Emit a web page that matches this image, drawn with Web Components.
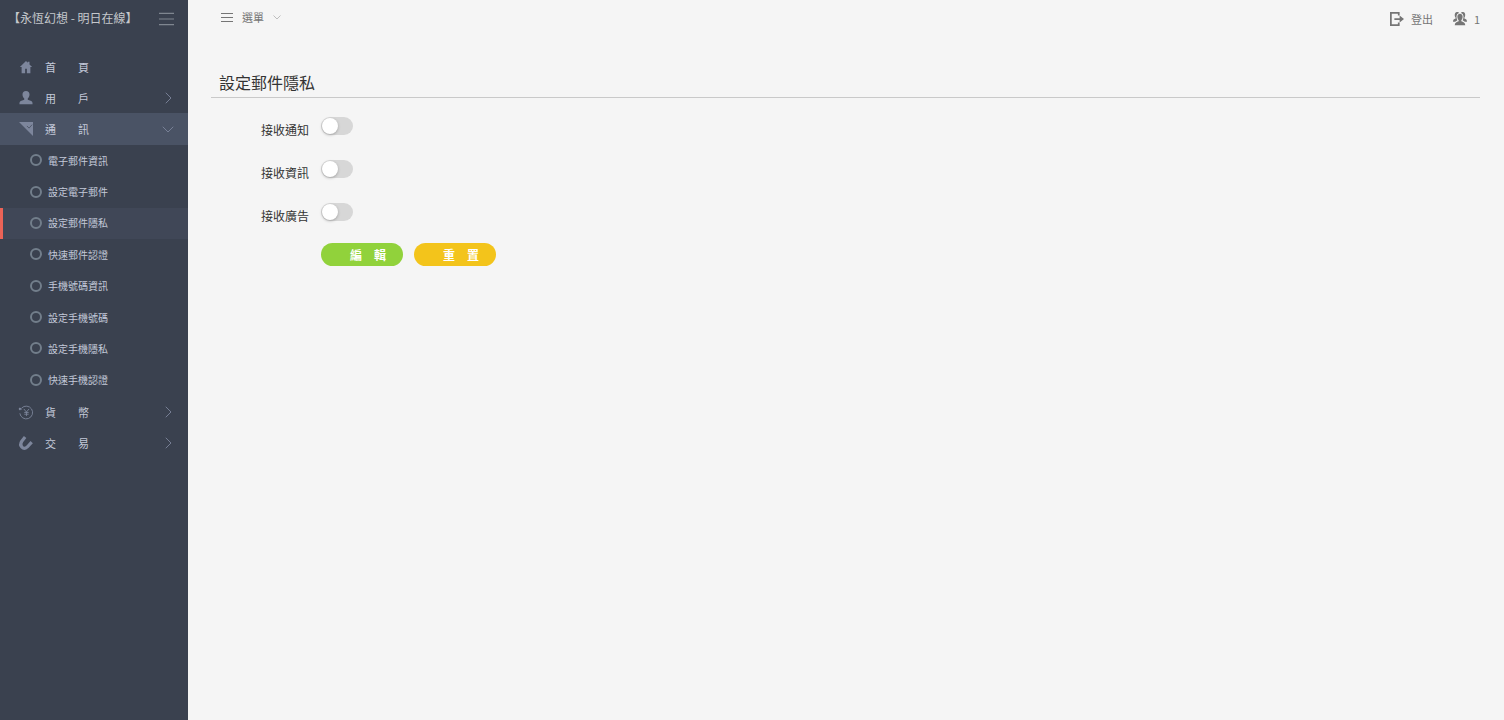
<!DOCTYPE html>
<html lang="zh-Hant">
<head>
<meta charset="utf-8">
<meta name="viewport" content="width=device-width, initial-scale=1">
<title>設定郵件隱私</title>
<style>
  body { margin: 0; background: #f5f5f5; font-family: "Noto Sans CJK TC", sans-serif; }
</style>
</head>
<body>
<app-shell>
  <side-nav slot="nav"></side-nav>
  <top-bar slot="bar"></top-bar>
  <privacy-form heading="設定郵件隱私"></privacy-form>
</app-shell>

<script>
const icons = {
  home: '<path d="M8 1 1 8h2v7h4v-5h2v5h4V8h2l-3-3V2h-2v1z" fill="currentColor"/>',
  user: '<path d="M8 0c2.600 0 4 1.700 4 4 0 2-.8 3.500-2 4.500V10l4 1.500c1 .5 1.500 1.200 1.500 3.500H.5c0-2.300.5-3 1.500-3.500L6 10V8.500C4.800 7.500 4 6 4 4c0-2.300 1.400-4 4-4z" fill="currentColor"/>',
  flag: '<path d="M0 0h16v16z" fill="currentColor"/><path d="m9 4.500 2.500 2.500L15 3" fill="none" stroke="#4a5365"/>',
  coin: '<path d="M3 3.500A7.300 7.300 0 1 1 1 9.500M1 6V3.500L3.500 5" fill="none" stroke="currentColor"/><circle cx="1" cy="4.500" r="1.300" fill="currentColor"/><path d="m5.500 4.500 3 3.500 3-3.500M8.500 8v4.500M6 8.500h5M6 10.500h5" fill="none" stroke="currentColor"/>',
  magnet: '<path d="M7 1.200 3.200 6C-.5 11.500 5 16.500 9.500 12.500l5-5.500" fill="none" stroke="currentColor" stroke-width="3.600"/>',
  bars: '<path d="M0 2.500h16M0 8.500h16M0 14.500h16" fill="none" stroke="currentColor" stroke-width="1.200"/>',
  list: '<path d="M0 3.300h16M0 8.700h16M0 14h16" fill="none" stroke="currentColor" stroke-width="1.500"/>',
  right: '<path d="m5 1 7 7-7 7" fill="none" stroke="currentColor" stroke-width="1.200"/>',
  down: '<path d="m1 5 7 7 7-7" fill="none" stroke="currentColor" stroke-width="1.200"/>',
  logout: '<path d="M10 4V1H1v14h9v-3" fill="none" stroke="currentColor" stroke-width="2"/><path d="M5 7h6V4l5 4-5 4V9H5z" fill="currentColor"/>',
  group: '<path d="M8 2c2 0 3 1.500 3 3.500S10 9 9.500 9.500v1c2 .5 4.500 1.500 4.500 4.500H2c0-3 2.500-4 4.500-4.500v-1C6 9 5 7.500 5 5.500S6 2 8 2z" fill="currentColor"/><path d="M4.500 0C6 0 6.500.5 7 1 5 1.500 4 3 4 5.500 4 7 4.500 8.500 5 9.500L2.500 11H0c0-2 1-3 3-3.500v-1C1.500 5 1.500 0 4.500 0zM11.500 0C10 0 9.500.5 9 1c2 .5 3 2 3 4.500 0 1.500-.5 3-1 4l2.500 1.500H16c0-2-1-3-3-3.500v-1C14.500 5 14.500 0 11.500 0z" fill="currentColor"/>'
};

class UiIcon extends HTMLElement {
  connectedCallback() {
    this.attachShadow({ mode: 'open' }).innerHTML = `
      <style>
        :host { display: block; flex: none; width: 14px; height: 14px; }
        svg { display: block; width: 100%; height: 100%; overflow: visible; }
      </style>
      <svg viewBox="0 0 16 16" aria-hidden="true">${icons[this.getAttribute('name')]}</svg>
    `;
  }
}
customElements.define('ui-icon', UiIcon);

class AppShell extends HTMLElement {
  connectedCallback() {
    this.attachShadow({ mode: 'open' }).innerHTML = `
      <style>
        :host { display: flex; min-height: 100vh; }
        aside { flex: 0 0 188px; background: #3a414f; }
        main { flex: 1; min-width: 0; }
      </style>
      <aside><slot name="nav"></slot></aside>
      <main><slot name="bar"></slot><slot></slot></main>
    `;
  }
}
customElements.define('app-shell', AppShell);

const menu = [
  { icon: 'home', text: '首　　頁' },
  { icon: 'user', text: '用　　戶', arrow: 'right' },
  {
    icon: 'flag', text: '通　　訊', arrow: 'down', open: true,
    items: ['電子郵件資訊', '設定電子郵件', '設定郵件隱私', '快速郵件認證', '手機號碼資訊', '設定手機號碼', '設定手機隱私', '快速手機認證']
  },
  { icon: 'coin', text: '貨　　幣', arrow: 'right' },
  { icon: 'magnet', text: '交　　易', arrow: 'right' }
];
const currentPage = '設定郵件隱私';

class SideNav extends HTMLElement {
  connectedCallback() {
    const rows = menu.map(m => `
      <li>
        <a class="row ${m.open ? 'open' : ''}" href="#">
          <ui-icon name="${m.icon}"></ui-icon>
          <span>${m.text}</span>
          ${m.arrow ? `<ui-icon class="arrow" name="${m.arrow}"></ui-icon>` : ''}
        </a>
        ${m.items ? `<ul class="sub">${m.items.map(t => `
          <li><a href="#" class="${t === currentPage ? 'current' : ''}"><i></i>${t}</a></li>`).join('')}</ul>` : ''}
      </li>
    `).join('');

    this.attachShadow({ mode: 'open' }).innerHTML = `
      <style>
        :host { display: block; color: #c3c9d9; }
        header { display: flex; align-items: center; justify-content: space-between; height: 37px; padding: 0 14px 0 8px; margin-bottom: 14px; }
        h1 { margin: 0; padding-bottom: 2px; font-size: 12px; font-weight: 400; color: #c5c8cc; white-space: nowrap; }
        button { border: 0; padding: 0; background: none; color: #7f8690; }
        button ui-icon { width: 15px; height: 15px; }
        ul { list-style: none; margin: 0; padding: 0; }
        a { box-sizing: border-box; color: inherit; text-decoration: none; display: flex; align-items: center; }
        .row { height: 31px; padding-left: 19px; padding-right: 14px; gap: 12px; font-size: 11px; }
        .row ui-icon { color: #7d869c; }
        .row .arrow { width: 12px; height: 12px; margin-left: auto; }
        .open { height: 32px; background: #4a5365; }
        .sub { display: grid; grid-auto-rows: 1fr; height: 251px; font-size: 10px; }
        .sub a { height: 100%; padding-left: 27px; padding-bottom: 1px; gap: 6px; border-left: 3px solid transparent; }
        .sub .current { background: #404757; border-color: #eb6357; }
        i { box-sizing: border-box; width: 12px; height: 12px; border: 2px solid #727e8b; border-radius: 50%; }
      </style>
      <header>
        <h1>【永恆幻想 - 明日在線】</h1>
        <button type="button" aria-label="收合選單"><ui-icon name="bars"></ui-icon></button>
      </header>
      <nav><ul>${rows}</ul></nav>
    `;
  }
}
customElements.define('side-nav', SideNav);

class TopBar extends HTMLElement {
  connectedCallback() {
    this.attachShadow({ mode: 'open' }).innerHTML = `
      <style>
        :host { display: flex; justify-content: space-between; align-items: flex-start; height: 59px; padding: 0 24px 0 33px; color: #757575; font-size: 11px; }
        button, a { display: flex; align-items: center; gap: 7px; border: 0; padding: 0; background: none; color: inherit; font: inherit; text-decoration: none; }
        button { height: 34px; gap: 9px; }
        .list { width: 12px; height: 12px; }
        .down { width: 8px; height: 8px; color: #999; }
        div { display: flex; gap: 20px; height: 38px; }
      </style>
      <button type="button"><ui-icon class="list" name="list"></ui-icon>選單<ui-icon class="down" name="down"></ui-icon></button>
      <div>
        <a href="#"><ui-icon name="logout"></ui-icon>登出</a>
        <a href="#"><ui-icon name="group"></ui-icon>1</a>
      </div>
    `;
  }
}
customElements.define('top-bar', TopBar);

class ToggleRow extends HTMLElement {
  connectedCallback() {
    this.attachShadow({ mode: 'open' }).innerHTML = `
      <style>
        :host { display: flex; gap: 12px; height: 43px; font-size: 12px; }
        label { box-sizing: border-box; width: 98px; padding-top: 5px; line-height: 16px; text-align: right; color: #333; }
        input { appearance: none; width: 32px; height: 18px; margin: 0; border-radius: 9px; background: #d7d7d7; }
        input::before { content: ""; display: block; width: 16px; height: 16px; margin: 1px; border-radius: 50%; background: #fff; box-shadow: 0 1px 3px rgba(0,0,0,.25); }
        input:checked { background: #91d23b; }
        input:checked::before { margin-left: 15px; }
      </style>
      <label for="toggle">${this.getAttribute('label')}</label>
      <input id="toggle" type="checkbox" role="switch">
    `;
  }
}
customElements.define('toggle-row', ToggleRow);

class PrivacyForm extends HTMLElement {
  connectedCallback() {
    this.attachShadow({ mode: 'open' }).innerHTML = `
      <style>
        :host { display: block; margin: 0 24px 0 23px; }
        h2 { margin: 0 0 19px; padding: 11px 8px 3px; border-bottom: 1px solid #c9c9c9; line-height: 24px; font-size: 16px; font-weight: 400; color: #333; }
        .actions { display: flex; gap: 11px; padding-left: 110px; margin-top: -3px; }
        button { width: 82px; height: 23px; padding: 0; border: 0; border-radius: 12px; color: #fff; font: 700 12px "Noto Sans CJK TC", sans-serif; white-space: pre; }
        .edit { background: #91d23b; }
        .reset { background: #f3c41b; }
      </style>
      <h2>${this.getAttribute('heading')}</h2>
      <form>
        <toggle-row label="接收通知"></toggle-row>
        <toggle-row label="接收資訊"></toggle-row>
        <toggle-row label="接收廣告"></toggle-row>
        <div class="actions">
          <button class="edit" type="button">　編　輯</button>
          <button class="reset" type="reset">　重　置</button>
        </div>
      </form>
    `;
  }
}
customElements.define('privacy-form', PrivacyForm);
</script>
</body>
</html>
